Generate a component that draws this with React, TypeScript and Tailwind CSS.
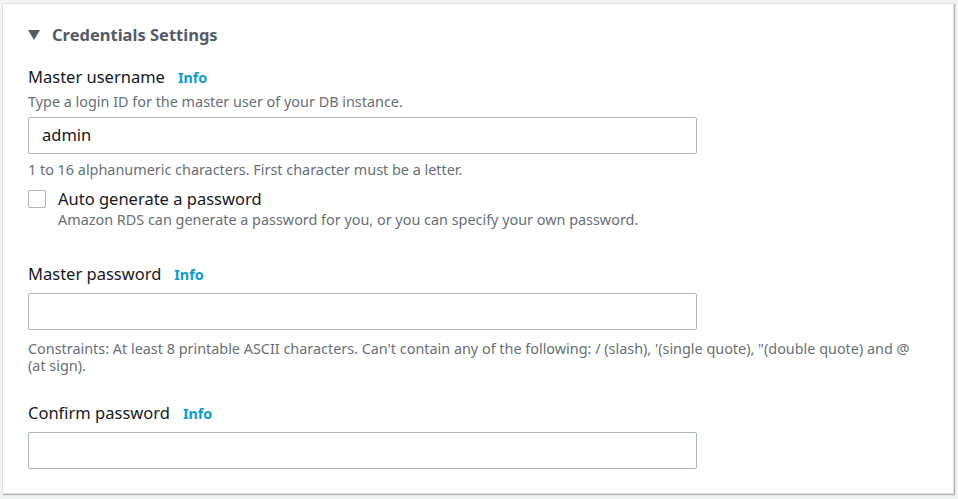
import React from 'react';

function Label({ text }: { text: string }) {
  return (
    <div className="flex items-baseline gap-[13px] h-[24px]">
      <span className="text-[16.5px] text-[#16191f]">{text}</span>
      <span className="text-[14.3px] font-bold text-[#0a9ccf]">Info</span>
    </div>
  );
}

function TextInput({ value }: { value?: string }) {
  return (
    <div className="w-[669px] h-[37px] border border-[#aab7b8] rounded-[2px] bg-white flex items-center px-[13px] text-[16.5px] text-[#16191f]">
      {value}
    </div>
  );
}

export default function App() {
  return (
    <div
      className="w-[958px] h-[499px] bg-[#f2f3f3] pt-[3px] pl-[2px] overflow-hidden"
      style={{ fontFamily: '"Noto Sans", "Open Sans", sans-serif' }}
    >
      <div className="w-[952px] h-[491px] bg-white border border-[#dfe2e2] shadow-[1px_1px_1px_rgba(0,0,0,0.25)] pl-[25px] pt-[19px]">
        <div className="flex items-center h-[24px] gap-[12px]">
          <svg width="12" height="10" viewBox="0 0 12 10">
            <polygon points="0,0 12,0 6,10" fill="#545b64" />
          </svg>
          <span className="text-[16.5px] font-bold text-[#545b64]">Credentials Settings</span>
        </div>

        <div className="mt-[18px]">
          <Label text="Master username" />
          <div className="text-[14.4px] text-[#687078] leading-[20px] mt-[3px]">
            Type a login ID for the master user of your DB instance.
          </div>
          <div className="mt-[5px]">
            <TextInput value="admin" />
          </div>
          <div className="text-[14.4px] text-[#687078] leading-[20px] mt-[6px]">
            1 to 16 alphanumeric characters. First character must be a letter.
          </div>
          <div className="flex mt-[8px]">
            <div className="w-[18px] h-[18px] border border-[#aab7b8] rounded-[2px] mt-[2px]" />
            <div className="ml-[12px]">
              <div className="text-[16.5px] text-[#16191f] leading-[22px]">Auto generate a password</div>
              <div className="text-[14.4px] text-[#687078] leading-[20px]">
                Amazon RDS can generate a password for you, or you can specify your own password.
              </div>
            </div>
          </div>
        </div>

        <div className="mt-[32px]">
          <Label text="Master password" />
          <div className="mt-[7px]">
            <TextInput />
          </div>
          <div className="text-[14.4px] text-[#687078] leading-[17px] mt-[10px] w-[895px]">
            Constraints: At least 8 printable ASCII characters. Can't contain any of the following: / (slash), '(single quote), "(double quote) and @ (at sign).
          </div>
        </div>

        <div className="mt-[27px]">
          <Label text="Confirm password" />
          <div className="mt-[7px]">
            <TextInput />
          </div>
        </div>
      </div>
    </div>
  );
}
